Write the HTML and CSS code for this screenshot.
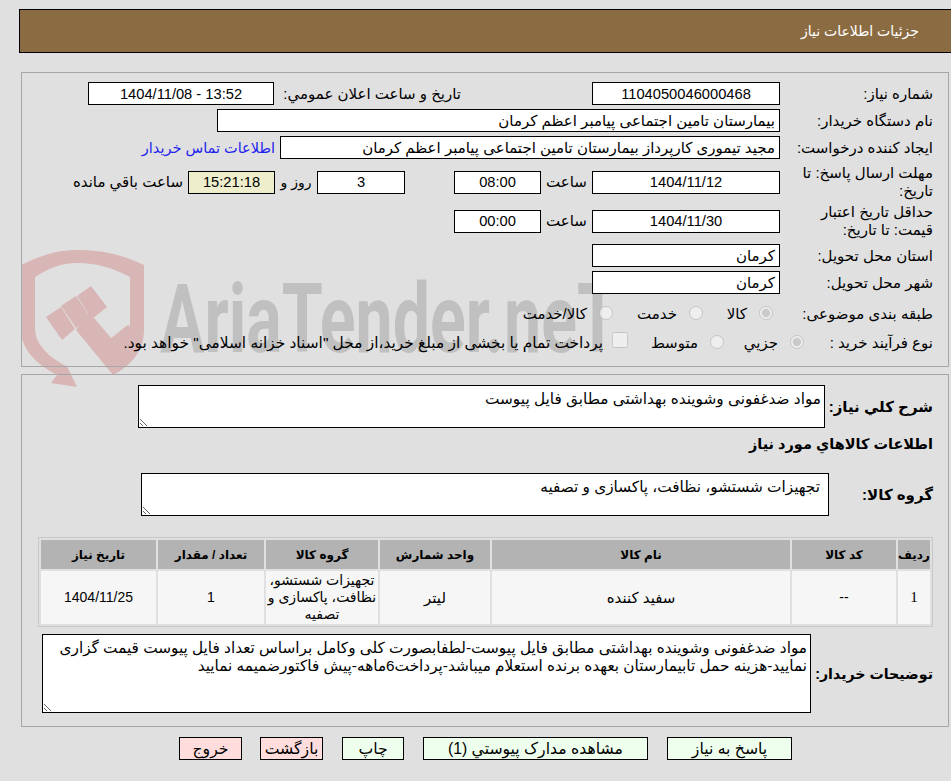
FILE: index.html
```html
<!DOCTYPE html>
<html lang="fa" dir="rtl">
<head>
<meta charset="utf-8">
<title>جزئیات اطلاعات نیاز</title>
<link rel="stylesheet" href="styles.css">
</head>
<body>
<header class="page-head">جزئیات اطلاعات نیاز</header>

<svg class="mark" viewBox="0 0 640 150" width="640" height="150" aria-hidden="true">
  <path class="mark-shield" fill-rule="evenodd" d="M78 0C105 0 125 6 144 15L144 80C144 102 130 116 113 125L76 80L89 62L111 88C123 80 130 70 130 78L130 27C113 18 96 13 78 13C60 13 50 18 35 27L35 78C35 95 50 108 68 117L65 112L77 137L51 133L57 125C38 115 21 100 21 80L21 15C40 6 55 0 78 0Z"/>
  <polygon class="mark-shield" points="46,67 61,57 75,79 62,90"/>
  <polygon class="mark-shield" points="61,56 76,46 91,68 76,78"/>
  <polygon class="mark-shield" points="77,46 91,36 107,57 92,69"/>
  <text class="mark-text" x="160" y="102" textLength="458" lengthAdjust="spacingAndGlyphs">AriaTender.neT</text>
</svg>

<section class="panel panel-info">
  <div class="row">
    <div class="label">شماره نیاز:</div>
    <div class="box box-date num">1104050046000468</div>
    <div class="label-inline">تاریخ و ساعت اعلان عمومي:</div>
    <div class="box box-public num ltr">1404/11/08 - 13:52</div>
  </div>
  <div class="row">
    <div class="label">نام دستگاه خریدار:</div>
    <div class="box box-buyer start">بیمارستان تامین اجتماعی پیامبر اعظم کرمان</div>
  </div>
  <div class="row">
    <div class="label">ایجاد کننده درخواست:</div>
    <div class="box box-creator start">مجید تیموری کارپرداز بیمارستان تامین اجتماعی پیامبر اعظم کرمان</div>
    <a class="contact" href="#">اطلاعات تماس خریدار</a>
  </div>
  <div class="row row-tall">
    <div class="label">مهلت ارسال پاسخ: تا تاریخ:</div>
    <div class="box box-date num">1404/11/12</div>
    <div class="word-hour">ساعت</div>
    <div class="box box-time num">08:00</div>
    <div class="box box-days num">3</div>
    <div class="word-day">روز و</div>
    <div class="box box-timer num">15:21:18</div>
    <div class="word-left">ساعت باقي مانده</div>
  </div>
  <div class="row row-tall">
    <div class="label">حداقل تاریخ اعتبار قیمت: تا تاریخ:</div>
    <div class="box box-date num">1404/11/30</div>
    <div class="word-hour">ساعت</div>
    <div class="box box-time num">00:00</div>
  </div>
  <div class="row">
    <div class="label">استان محل تحویل:</div>
    <div class="box box-date start">کرمان</div>
  </div>
  <div class="row">
    <div class="label">شهر محل تحویل:</div>
    <div class="box box-date start">کرمان</div>
  </div>
  <div class="row row-kind">
    <div class="label label-kind">طبقه بندی موضوعی:</div>
    <label class="opt opt-a"><input type="radio" name="kind" checked disabled><span>کالا</span></label>
    <label class="opt opt-b"><input type="radio" name="kind" disabled><span>خدمت</span></label>
    <label class="opt"><input type="radio" name="kind" disabled><span>کالا/خدمت</span></label>
  </div>
  <div class="row row-buy">
    <div class="label label-buy">نوع فرآیند خرید :</div>
    <label class="opt opt-c"><input type="radio" name="buy" checked disabled><span>جزیي</span></label>
    <label class="opt opt-d"><input type="radio" name="buy" disabled><span>متوسط</span></label>
    <label class="opt opt-e"><input class="check" type="checkbox" disabled><span>پرداخت تمام یا بخشی از مبلغ خرید،از محل "اسناد خزانه اسلامی" خواهد بود.</span></label>
  </div>
</section>

<section class="panel panel-items">
  <div class="area-row area-need">
    <div class="label-bold">شرح کلي نیاز:</div>
    <textarea class="area area-a" readonly>مواد ضدغفونی وشوینده بهداشتی مطابق فایل پیوست</textarea>
  </div>
  <h2 class="heading">اطلاعات کالاهاي مورد نیاز</h2>
  <div class="area-row area-group">
    <div class="label-bold">گروه کالا:</div>
    <textarea class="area area-b" readonly>تجهیزات شستشو، نظافت، پاکسازی و تصفیه</textarea>
  </div>
  <table class="items">
    <colgroup>
      <col class="c1"><col class="c2"><col class="c3"><col class="c4"><col class="c5"><col class="c6"><col class="c7">
    </colgroup>
    <thead>
      <tr><th>ردیف</th><th>کد کالا</th><th>نام کالا</th><th>واحد شمارش</th><th>گروه کالا</th><th>تعداد / مقدار</th><th>تاریخ نیاز</th></tr>
    </thead>
    <tbody>
      <tr><td class="serif">1</td><td class="cell-num">--</td><td>سفید کننده</td><td>لیتر</td><td class="cell-group">تجهیزات شستشو،<br>نظافت، پاکسازی و<br>تصفیه</td><td class="cell-num">1</td><td class="cell-num">1404/11/25</td></tr>
    </tbody>
  </table>
  <div class="area-row area-desc">
    <div class="label-bold">توضیحات خریدار:</div>
    <textarea class="area area-c" readonly>مواد ضدغفونی وشوینده بهداشتی مطابق فایل پیوست-لطفابصورت کلی وکامل براساس تعداد فایل پیوست قیمت گزاری نمایید-هزینه حمل تابیمارستان بعهده برنده استعلام میباشد-پرداخت6ماهه-پیش فاکتورضمیمه نمایید</textarea>
  </div>
</section>

<nav class="actions">
  <button class="btn go b-reply" type="button">پاسخ به نیاز</button>
  <button class="btn go b-docs" type="button">مشاهده مدارک پیوستي (1)</button>
  <button class="btn go b-print" type="button">چاپ</button>
  <button class="btn stop b-back" type="button">بازگشت</button>
  <button class="btn stop b-exit" type="button">خروج</button>
</nav>
</body>
</html>
```

FILE: styles.css
```css
* { box-sizing: border-box; }

html, body { margin: 0; padding: 0; }

body {
  position: relative;
  width: 951px;
  height: 781px;
  overflow: hidden;
  background: #e0e0e0;
  color: #000;
  font-family: "Liberation Sans", "DejaVu Sans", sans-serif;
  font-size: 15px;
  padding-top: 9px;
}

.page-head {
  width: 932px;
  height: 44px;
  margin-bottom: 19px;
  padding: 0 32px 0 0;
  display: flex;
  align-items: center;
  background: #8b6c42;
  border: 1px solid #000;
  border-right: 0;
  color: #fff;
  font-size: 14px;
}

.mark {
  position: absolute;
  left: 0;
  top: 250px;
  z-index: 0;
  direction: ltr;
}
.mark-shield { fill: #d9b6b6; }
.mark-text {
  fill: #c0c0c0;
  direction: ltr;
  font-family: "Roboto", sans-serif;
  font-weight: 700;
  font-size: 96px;
}

.panel {
  position: relative;
  z-index: 1;
  width: 928px;
  margin-right: 2px;
  border: 1px solid #a6a6a6;
}
.panel-info { height: 295px; padding: 9px 0 0; margin-bottom: 7px; }
.panel-items { height: 353px; padding: 10px 15px 0 0; }

.row {
  display: flex;
  align-items: center;
  height: 23px;
  margin-bottom: 4px;
}
.row-tall { height: 38px; margin-bottom: 0; }
.row-tall + .row-tall { margin-top: 1px; margin-bottom: 4px; }
.row-kind { height: 26px; margin-top: 7px; margin-bottom: 3px; }
.row-buy { height: 26px; margin-bottom: 0; }

.label {
  width: 168px;
  flex: none;
  padding: 0 15px 0 10px;
  line-height: 18px;
  white-space: normal;
}
.label-kind { width: 175px; padding-left: 0; white-space: nowrap; }
.label-buy { width: 144px; padding-left: 0; white-space: nowrap; }

.box {
  height: 23px;
  flex: none;
  background: #fff;
  border: 1px solid #000;
  display: flex;
  align-items: center;
  justify-content: center;
  padding: 0 4px;
  white-space: nowrap;
  overflow: hidden;
}
.box.start { justify-content: flex-start; }
.num { font-size: 14.7px; }
.ltr { direction: ltr; }
.box-date { width: 188px; }
.box-public { width: 186px; }
.box-buyer { width: 563px; }
.box-creator { width: 500px; }
.box-time { width: 87px; }
.box-days { width: 88px; margin-right: 49px; }
.box-timer { width: 87px; background: #eeeecc; }

.label-inline { width: 187px; margin-right: 131px; flex: none; white-space: nowrap; }
.contact { margin-right: 5px; color: #2222ee; font-size: 14.5px; text-decoration: none; white-space: nowrap; }
.word-hour { width: 51px; flex: none; text-align: center; }
.word-day { width: 42px; flex: none; font-size: 14px; text-align: center; white-space: nowrap; }
.word-left { margin-right: 5px; white-space: nowrap; }

.opt { display: flex; align-items: center; flex: none; white-space: nowrap; }
.opt input { width: 14px; height: 14px; margin: 0 0 3px 12px; flex: none; }
.opt-a { width: 70px; }
.opt-b { width: 90px; }
.opt-c { width: 80px; }
.opt-d { width: 96px; }
.opt-e { font-size: 15.4px; }
.opt input.check { width: 16px; height: 16px; margin-left: 9px; margin-bottom: 6px; }

.area-row { display: flex; align-items: center; }
.area-need { height: 43px; }
.area-group { height: 43px; margin-bottom: 21px; }
.area-desc { height: 79px; margin-top: 7px; }

.label-bold { width: 108px; flex: none; font-weight: 700; font-size: 15px; white-space: nowrap; }
.area-group .label-bold { width: 104px; }
.area-desc .label-bold { width: 122px; font-size: 14.2px; }

.area {
  display: block;
  flex: none;
  background: #fff;
  border: 1px solid #000;
  border-radius: 0;
  margin: 0;
  padding: 4px 3px 2px;
  outline: 0;
  resize: both;
  overflow: hidden;
  color: #000;
  font: inherit;
  font-size: 15.3px;
  line-height: 18px;
}
.area-a { width: 687px; height: 43px; }
.area-b { width: 688px; height: 43px; padding-right: 8px; }
.area-c { width: 769px; height: 79px; }

.heading {
  margin: 0;
  height: 45px;
  padding-top: 7px;
  font-size: 14.5px;
  font-weight: 700;
  line-height: 18px;
}

.items {
  table-layout: fixed;
  width: 895px;
  border: 1px solid #c8c8c8;
  border-collapse: separate;
  border-spacing: 2px;
}
.c1 { width: 32px; }
.c2 { width: 104px; }
.c3 { width: 298px; }
.c4 { width: 110px; }
.c5 { width: 112px; }
.c6 { width: 106px; }
.c7 { width: 115px; }

.items th {
  height: 29px;
  padding: 0;
  background: #b3b3b3;
  font-size: 12px;
  font-weight: 700;
}
.items td {
  height: 53px;
  padding: 0 2px;
  background: #f6f6f6;
  text-align: center;
  font-size: 15px;
  line-height: 17px;
}
.items td.cell-num { font-size: 14px; }
.items td.cell-group { padding: 0; font-size: 14px; white-space: nowrap; }
.items td.serif { font-family: "Liberation Serif", serif; font-size: 15px; }

.actions {
  position: relative;
  z-index: 1;
  display: flex;
  margin-top: 10px;
  padding-right: 159px;
}
.btn {
  height: 23px;
  flex: none;
  padding: 0;
  border: 1px solid #000;
  border-radius: 0;
  color: #000;
  font: inherit;
  font-size: 15.7px;
}
.go { background: #eeffee; }
.stop { background: #ffdddd; }
.b-reply { width: 125px; margin-left: 19px; }
.b-docs { width: 225px; margin-left: 19px; }
.b-print { width: 62px; margin-left: 19px; }
.b-back { width: 63px; margin-left: 18px; }
.b-exit { width: 63px; }
```
